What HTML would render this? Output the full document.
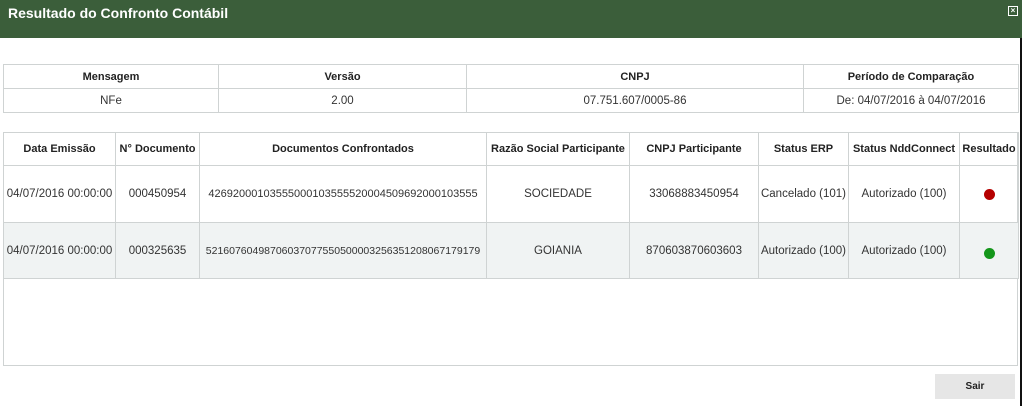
<!DOCTYPE html>
<html><head><style>
body{margin:0;width:1022px;height:406px;background:#fff;font-family:"Liberation Sans",sans-serif;font-size:11.5px;color:#333;position:relative;overflow:hidden}
.hdr{position:absolute;left:0;top:0;width:1022px;height:38px;background:#3b5e3a;color:#fff;font-weight:bold;font-size:14px}
.hdr span{position:absolute;left:8px;top:5px}
.x{position:absolute;left:1008px;top:6px;width:8px;height:8px;border:1px solid #fff;background:#3b5e3a;color:#fff;font-size:8px;line-height:8px;text-align:center}
.rb{position:absolute;left:1020px;top:38px;width:2px;height:368px;background:#111}
table{position:absolute;border-collapse:collapse;table-layout:fixed}
td,th{border:1px solid #cfd3d3;text-align:center;padding:0;overflow:hidden;white-space:nowrap}
th{font-weight:bold;color:#222;font-size:11px}
.dot{display:inline-block;width:11px;height:11px;border-radius:50%;margin-top:3px}
.btn{position:absolute;left:935px;top:374px;width:80px;height:25px;background:#e6e6e6;font-size:10px;font-weight:bold;text-align:center;line-height:25px;color:#222}
</style></head><body>
<div class="hdr"><span>Resultado do Confronto Contábil</span><div class="x">×</div></div>
<div class="rb"></div>
<table style="left:3px;top:64px;width:1015px">
<colgroup><col style="width:215px"><col style="width:248px"><col style="width:337px"><col style="width:215px"></colgroup>
<tr style="height:24px"><th>Mensagem</th><th>Versão</th><th>CNPJ</th><th>Período de Comparação</th></tr>
<tr style="height:24px"><td>NFe</td><td>2.00</td><td>07.751.607/0005-86</td><td>De: 04/07/2016 à 04/07/2016</td></tr>
</table>
<div style="position:absolute;left:3px;top:132px;width:1013px;height:232px;border:1px solid #cfd3d3"></div>
<table style="left:3px;top:132px;width:1015px">
<colgroup><col style="width:112px"><col style="width:84px"><col style="width:287px"><col style="width:143px"><col style="width:129px"><col style="width:90px"><col style="width:111px"><col style="width:59px"></colgroup>
<tr style="height:33px"><th>Data Emissão</th><th>N° Documento</th><th>Documentos Confrontados</th><th>Razão Social Participante</th><th>CNPJ Participante</th><th>Status ERP</th><th>Status NddConnect</th><th>Resultado</th></tr>
<tr style="height:57px"><td>04/07/2016 00:00:00</td><td>000450954</td><td style="font-size:11px">42692000103555000103555520004509692000103555</td><td>SOCIEDADE</td><td>33068883450954</td><td>Cancelado (101)</td><td>Autorizado (100)</td><td><span class="dot" style="background:#b50000"></span></td></tr>
<tr style="height:56px;background:#f0f3f3"><td>04/07/2016 00:00:00</td><td>000325635</td><td style="font-size:10.5px">52160760498706037077550500003256351208067179179</td><td>GOIANIA</td><td>870603870603603</td><td>Autorizado (100)</td><td>Autorizado (100)</td><td><span class="dot" style="background:#14961a;margin-top:8px"></span></td></tr>
</table>
<div class="btn">Sair</div>
</body></html>
